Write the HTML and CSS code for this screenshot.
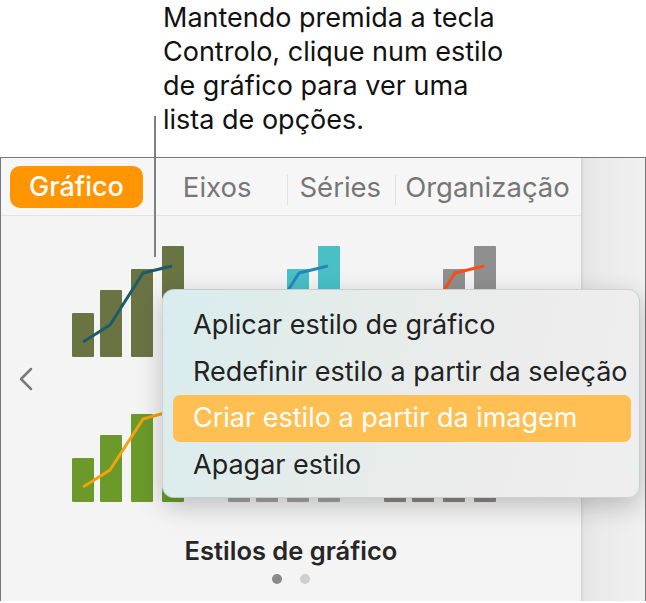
FILE: index.html
```html
<!DOCTYPE html>
<html lang="pt">
<head>
    <meta charset="UTF-8">
    <meta name="viewport" content="width=device-width, initial-scale=1.0">
    <title>Estilos de gráfico</title>
    <link rel="stylesheet" href="styles.css">
</head>
<body>
    <p class="note">Mantendo premida a tecla<br>Controlo, clique num estilo<br>de gráfico para ver uma<br>lista de opções.</p>
    <div class="pointer"></div>

    <div class="panel">
        <div class="main">
            <div class="tabs">
                <span class="tab active">Gráfico</span>
                <span class="tab eixos">Eixos</span>
                <span class="sep"></span>
                <span class="tab series">Séries</span>
                <span class="sep"></span>
                <span class="tab org">Organização</span>
            </div>

            <div class="gallery">
                <svg class="prev" width="16" height="24" viewBox="0 0 16 24">
                    <path d="M13 2 L3 12 L13 22" fill="none" stroke="#7a7a7a" stroke-width="2.5" stroke-linecap="round" stroke-linejoin="round"/>
                </svg>
                <div class="styles">
                    <!-- row 1 -->
                    <svg class="chart" viewBox="0 0 114 112">
                        <g fill="#6a7443"><rect x="0" y="67" width="22" height="44" rx="1"/><rect x="28" y="44" width="22" height="67" rx="1"/><rect x="59" y="23" width="22" height="88" rx="1"/><rect x="90" y="0" width="22" height="111" rx="1"/></g>
                        <polyline points="11,96 38,79 71,27 100,20" fill="none" stroke="#1d5b6b" stroke-width="3" stroke-linejoin="round"/>
                    </svg>
                    <svg class="chart" viewBox="0 0 114 112">
                        <g fill="#48c0c6"><rect x="0" y="67" width="22" height="44" rx="1"/><rect x="28" y="44" width="22" height="67" rx="1"/><rect x="59" y="23" width="22" height="88" rx="1"/><rect x="90" y="0" width="22" height="111" rx="1"/></g>
                        <polyline points="11,96 38,79 71,27 100,20" fill="none" stroke="#2a86b8" stroke-width="3" stroke-linejoin="round"/>
                    </svg>
                    <svg class="chart" viewBox="0 0 114 112">
                        <g fill="#8f8f8f"><rect x="0" y="67" width="22" height="44" rx="1"/><rect x="28" y="44" width="22" height="67" rx="1"/><rect x="59" y="23" width="22" height="88" rx="1"/><rect x="90" y="0" width="22" height="111" rx="1"/></g>
                        <polyline points="11,96 38,79 71,27 100,20" fill="none" stroke="#ff4d1a" stroke-width="3" stroke-linejoin="round"/>
                    </svg>
                    <!-- row 2 -->
                    <svg class="chart" viewBox="0 0 114 112">
                        <g fill="#6b9a2b"><rect x="0" y="67" width="22" height="44" rx="1"/><rect x="28" y="44" width="22" height="67" rx="1"/><rect x="59" y="23" width="22" height="88" rx="1"/><rect x="90" y="0" width="22" height="111" rx="1"/></g>
                        <polyline points="11,96 38,79 71,28 100,20" fill="none" stroke="#f2a20c" stroke-width="3" stroke-linejoin="round"/>
                    </svg>
                    <svg class="chart" viewBox="0 0 114 112">
                        <g fill="#a3a3a3"><rect x="0" y="67" width="22" height="44" rx="1"/><rect x="28" y="44" width="22" height="67" rx="1"/><rect x="59" y="23" width="22" height="88" rx="1"/><rect x="90" y="0" width="22" height="111" rx="1"/></g>
                        <polyline points="11,96 38,79 71,28 100,20" fill="none" stroke="#555" stroke-width="3" stroke-linejoin="round"/>
                    </svg>
                    <svg class="chart" viewBox="0 0 114 112">
                        <g fill="#8b8682"><rect x="0" y="67" width="22" height="44" rx="1"/><rect x="28" y="44" width="22" height="67" rx="1"/><rect x="59" y="23" width="22" height="88" rx="1"/><rect x="90" y="0" width="22" height="111" rx="1"/></g>
                        <polyline points="11,96 38,79 71,28 100,20" fill="none" stroke="#c94a2a" stroke-width="3" stroke-linejoin="round"/>
                    </svg>
                </div>
            </div>

            <div class="caption">Estilos de gráfico</div>
            <div class="dots"><span class="dot on"></span><span class="dot"></span></div>
        </div>
        <div class="side"></div>
    </div>

    <ul class="menu">
        <li>Aplicar estilo de gráfico</li>
        <li>Redefinir estilo a partir da seleção</li>
        <li class="hl">Criar estilo a partir da imagem</li>
        <li>Apagar estilo</li>
    </ul>
</body>
</html>
```

FILE: styles.css
```css
body {
    font-family: Inter, "Noto Sans", sans-serif;
    margin: 0;
    background: #fff;
    width: 646px;
    height: 603px;
    overflow: hidden;
    position: relative;
}
.note {
    margin: 0;
    padding: 1px 0 0 163px;
    font-size: 27px;
    line-height: 34px;
    color: #111;
    height: 157px;
    box-sizing: border-box;
}
.pointer {
    position: absolute;
    left: 154px;
    top: 116px;
    width: 2px;
    height: 141px;
    background: #808080;
    z-index: 2;
}
.panel {
    display: flex;
    height: 444px;
    border: 1.5px solid #777;
    border-bottom: none;
    box-sizing: border-box;
    background: #f4f4f4;
}
.main {
    width: 580px;
    display: flex;
    flex-direction: column;
}
.tabs {
    height: 57px;
    display: flex;
    align-items: center;
    padding-left: 9px;
    border-bottom: 1px solid #e3e3e3;
    background: #f6f6f6;
    overflow: hidden;
}
.tab {
    font-size: 27.5px;
    color: #767676;
    white-space: nowrap;
}
.tab.active {
    background: #ff9500;
    color: #fff;
    height: 42px;
    line-height: 42px;
    padding: 0 19px;
    border-radius: 10px;
    font-weight: 500;
    font-size: 27px;
}
.eixos {
    margin-left: 40px;
    margin-right: 36px;
}
.sep {
    width: 1px;
    height: 30px;
    background: #e2e2e2;
    margin-top: 6px;
    flex-shrink: 0;
}
.series {
    margin: 0 14px 0 11px;
}
.org {
    margin-left: 9px;
}
.gallery {
    display: flex;
    align-items: center;
    padding: 30px 0 0 17px;
}
.prev {
    margin-top: 8px;
}
.styles {
    margin-left: 38px;
    display: grid;
    grid-template-columns: repeat(3, 114px);
    grid-auto-rows: 112px;
    column-gap: 42px;
    row-gap: 33px;
}
.chart {
    width: 114px;
    height: 112px;
    display: block;
}
.caption {
    margin-top: 34px;
    text-align: center;
    font-size: 25.5px;
    line-height: 28px;
    font-weight: 600;
    color: #262626;
}
.dots {
    display: flex;
    justify-content: center;
    gap: 18px;
    margin-top: 9px;
}
.dot {
    width: 10px;
    height: 10px;
    border-radius: 50%;
    background: #cfcfcf;
}
.dot.on {
    background: #8a8a8a;
}
.side {
    flex: 1;
    background: linear-gradient(90deg, #d2d2d2 0, #e4e4e4 3px, #ebebeb 30%, #f0f0f0 100%);
}
.menu {
    position: absolute;
    left: 162px;
    top: 289px;
    width: 478px;
    height: 209px;
    margin: 0;
    padding: 12px 0 0;
    box-sizing: border-box;
    list-style: none;
    border-radius: 12px;
    background: linear-gradient(105deg, #d9ecee 0%, #e4ecea 35%, #ececec 70%, #eeeeee 100%);
    border: 1px solid rgba(0, 0, 0, 0.12);
    box-shadow: 0 8px 26px rgba(0, 0, 0, 0.22);
    z-index: 3;
}
.menu li {
    height: 46.5px;
    line-height: 46.5px;
    margin: 0 8px 0 10px;
    padding-left: 20px;
    font-size: 27px;
    color: #222;
    border-radius: 7px;
}
.menu li.hl {
    background: #ffbf52;
    color: #fff;
}
```
